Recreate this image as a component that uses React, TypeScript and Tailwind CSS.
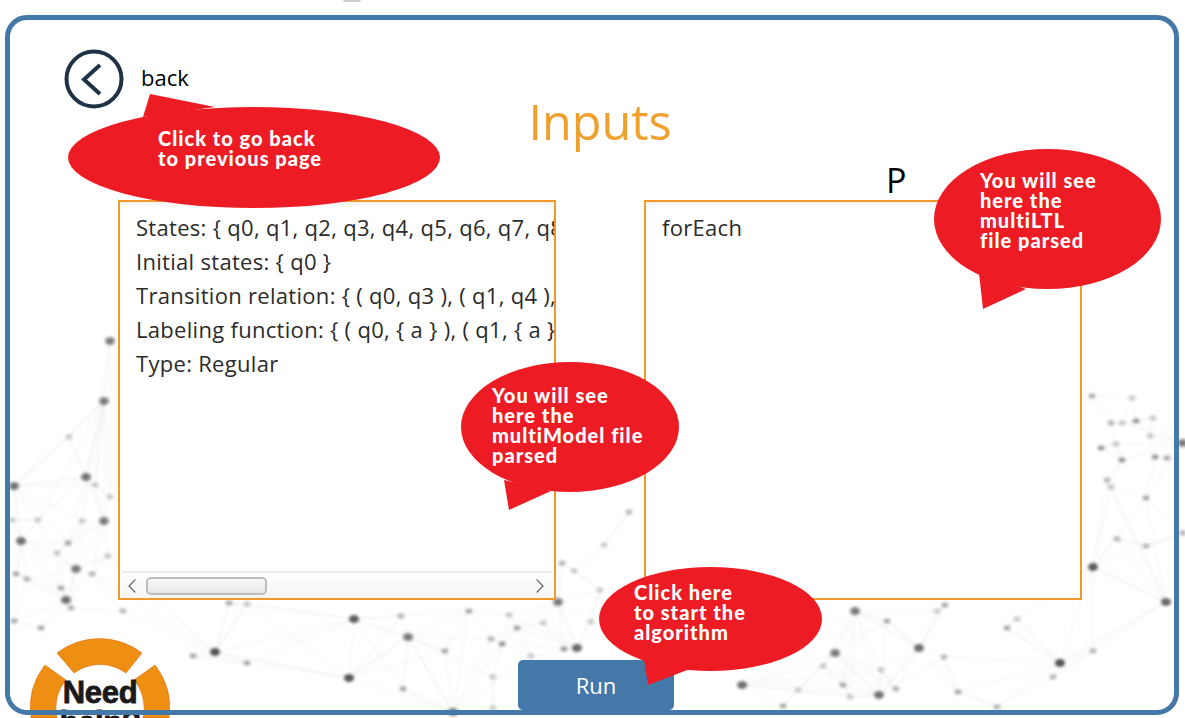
import { ChevronLeft, ChevronRight } from "lucide-react";

// dots read off the reference: x, y, darkness
const DOTS: [number, number, number][] = [
  [110, 341, 0.7], [104, 401, 0.7], [69, 437, 0.3], [86, 477, 0.75], [95, 485, 0.3], [110, 497, 0.3], [14, 486, 0.75],
  [12, 520, 0.3], [38, 520, 0.3], [82, 521, 0.3], [104, 521, 0.7], [21, 541, 0.8], [68, 543, 0.5], [57, 553, 0.3],
  [108, 556, 0.3], [76, 569, 0.7], [92, 574, 0.4], [16, 574, 0.5], [27, 579, 0.4], [61, 588, 0.5], [66, 600, 0.8],
  [71, 608, 0.4], [14, 621, 0.5], [41, 628, 0.5], [123, 611, 0.4],
  [1092, 396, 0.5], [1132, 398, 0.3], [1111, 423, 0.4], [1122, 423, 0.3], [1136, 421, 0.6], [1153, 418, 0.3],
  [1150, 436, 0.3], [1183, 443, 0.7], [1101, 448, 0.6], [1116, 444, 0.3], [1122, 460, 0.6], [1155, 457, 0.6],
  [1167, 458, 0.5], [1107, 480, 0.4], [1111, 487, 0.3], [1146, 498, 0.5], [1117, 539, 0.4], [1146, 546, 0.4],
  [1183, 533, 0.4], [1093, 567, 0.9], [1166, 602, 0.85], [855, 611, 0.7], [887, 621, 0.5], [937, 611, 0.3],
  [945, 605, 0.5], [1017, 619, 0.3], [1007, 628, 0.5], [919, 648, 0.8], [944, 657, 0.4], [835, 653, 0.7],
  [823, 666, 0.3], [881, 670, 0.3], [1060, 663, 0.95], [1093, 651, 0.4], [1053, 677, 0.4], [843, 685, 0.5],
  [850, 697, 0.3], [879, 695, 0.75], [896, 689, 0.4], [958, 692, 0.5], [997, 707, 0.4],
  [229, 603, 0.5], [247, 604, 0.3], [354, 619, 0.9], [215, 652, 0.95], [193, 656, 0.5], [247, 663, 0.5], [349, 678, 0.95],
  [401, 616, 0.4], [408, 637, 0.7], [403, 689, 0.5], [469, 611, 0.5], [509, 615, 0.3], [517, 628, 0.5], [491, 639, 0.4],
  [502, 644, 0.6], [445, 651, 0.5], [493, 677, 0.3], [493, 708, 0.3], [453, 712, 0.7],
  [562, 563, 0.4], [574, 571, 0.3], [558, 602, 0.7], [543, 623, 0.3], [591, 622, 0.3], [577, 648, 0.85], [564, 649, 0.6],
  [531, 656, 0.3], [742, 685, 0.8], [798, 690, 0.3], [783, 706, 0.5], [629, 512, 0.4], [604, 545, 0.3], [600, 590, 0.3],
];

type Seg = [number, number, number, number];

function buildLinks(): Seg[] {
  const out: Seg[] = [];
  DOTS.forEach(([x, y, o]) => {
    const reach = o >= 0.7 ? 170 : 70;
    const near = DOTS.filter(([a, b]) => Math.hypot(a - x, b - y) < reach && (a !== x || b !== y))
      .sort((p, q) => Math.hypot(p[0] - x, p[1] - y) - Math.hypot(q[0] - x, q[1] - y))
      .slice(o >= 0.7 ? 2 : 0, o >= 0.7 ? 9 : 2);
    near.forEach(([a, b]) => out.push([x, y, a, b]));
  });
  return out;
}

const LINKS = buildLinks();

function Network() {
  return (
    <svg className="absolute inset-0" width="1185" height="718" viewBox="0 0 1185 718">
      <defs>
        <filter id="soft">
          <feGaussianBlur stdDeviation="1.4" />
        </filter>
        <filter id="softer">
          <feGaussianBlur stdDeviation="0.9" />
        </filter>
      </defs>
      <g stroke="#000" strokeOpacity="0.02" strokeWidth="2.5" filter="url(#softer)">
        {LINKS.map(([x1, y1, x2, y2], i) => (
          <line key={i} x1={x1} y1={y1} x2={x2} y2={y2} />
        ))}
      </g>
      <g filter="url(#soft)">
        {DOTS.map(([x, y, o], i) => (
          <ellipse key={i} cx={x} cy={y} rx={o >= 0.7 ? 5 : 3.4} ry={o >= 0.7 ? 4 : 2.4} fill="#222" fillOpacity={o * 0.8} />
        ))}
      </g>
    </svg>
  );
}

type BubbleProps = {
  box: string;
  text: string;
  width: number;
  height: number;
  tail: string;
  lines: string[];
};

// red speech bubble, svg origin is the box's top left
function Bubble({ box, text, width, height, tail, lines }: BubbleProps) {
  return (
    <div className={`absolute ${box}`}>
      <svg width={width} height={height} className="block overflow-visible">
        <ellipse cx={width / 2} cy={height / 2} rx={width / 2} ry={height / 2} fill="#ed1c24" />
        <polygon points={tail} fill="#ed1c24" />
      </svg>
      <div className={`absolute ${text} font-['Lato',sans-serif] font-black text-[20px] leading-[20px] tracking-[1px] text-white whitespace-nowrap`}>
        {lines.map((l) => (
          <div key={l}>{l}</div>
        ))}
      </div>
    </div>
  );
}

function LogoBadge() {
  return (
    <div className="absolute left-[30px] top-[637px] w-[150px] h-[81px] bg-white overflow-hidden">
      <svg width="150" height="83" className="absolute left-0 top-[-2px]">
        <g fill="#ee8f13" stroke="#e0701a" strokeWidth="0.6">
          <path d="M27 18 A70 70 0 0 1 112 18 L96 38 A44 44 0 0 0 44 38 Z" />
          <path d="M15 30 A70 70 0 0 0 1 83 L27 83 A44 44 0 0 1 36 45 Z" />
          <path d="M125 30 A70 70 0 0 1 139 83 L113 83 A44 44 0 0 0 104 45 Z" />
        </g>
      </svg>
      <div className="absolute left-0 w-[140px] top-[41px] text-center font-['Liberation_Sans',sans-serif] font-bold text-[31px] leading-[30px] tracking-[-0.3px] text-[#1a1a1a] [-webkit-text-stroke:0.8px_#1a1a1a]">
        Need
        <br />
        help?
      </div>
    </div>
  );
}

export default function App() {
  const rows = [
    "States: { q0, q1, q2, q3, q4, q5, q6, q7, q8, q9 }",
    "Initial states: { q0 }",
    "Transition relation: { ( q0, q3 ), ( q1, q4 ), ( q2, q5 ) }",
    "Labeling function: { ( q0, { a } ), ( q1, { a } ), ( q2, { b } ) }",
    "Type: Regular",
  ];

  return (
    <div className="relative w-[1185px] h-[718px] overflow-hidden bg-white font-['Open_Sans',sans-serif]">
      <Network />

      <div className="absolute left-[343px] top-[-3px] w-[18px] h-[5px] rounded-full bg-[#ccc]" />

      <div className="relative h-[718px] pt-[49px] pl-[64px] pr-[49px] flex flex-col">
        <div className="flex items-center gap-[17px]">
          <svg width="60" height="60" viewBox="0 0 60 60">
            <circle cx="30" cy="30" r="27.5" fill="none" stroke="#1e3446" strokeWidth="4" />
            <path d="M36 16 L20 30.5 L36 45" fill="none" stroke="#1e3446" strokeWidth="4" />
          </svg>
          <span className="text-[22px] text-black leading-none pb-[4px]">back</span>
        </div>

        <h1 className="mt-[-20px] text-center text-[48.5px] leading-[64px] font-normal text-[#f0a02c]">Inputs</h1>

        <div className="relative mt-[47px] ml-[54px] flex gap-[88px]">
          <div className="w-[438px] h-[400px] border-2 border-[#f0982a] bg-white flex flex-col shadow-[inset_0_6px_6px_-4px_rgba(0,0,0,0.08)]">
            <div className="flex-1 overflow-hidden pt-[8px] pl-[16px] text-[22px] leading-[34px] tracking-[0.3px] text-[#2b2b2b] whitespace-nowrap">
              {rows.map((r) => (
                <div key={r}>{r}</div>
              ))}
            </div>
            <div className="h-[27px] mx-[2px] border-t-2 border-[#ececec] bg-gradient-to-b from-white to-[#f4f4f4] flex items-center justify-between">
              <div className="flex items-center gap-[2px] ml-[-2px]">
                <ChevronLeft size={24} strokeWidth={1.2} className="text-[#666]" />
                <div className="w-[121px] h-[18px] rounded-[5px] border-2 border-[#bdbdbd] bg-gradient-to-b from-[#fafafa] to-[#e6e6e6]" />
              </div>
              <ChevronRight size={24} strokeWidth={1.2} className="text-[#666]" />
            </div>
          </div>

          <div className="w-[438px] h-[400px] border-2 border-[#f0982a] bg-white pt-[8px] pl-[16px] text-[22px] leading-[34px] tracking-[0.3px] text-[#2b2b2b] shadow-[inset_0_6px_6px_-4px_rgba(0,0,0,0.08)]">
            forEach
          </div>

          <span className="absolute left-[768px] top-[-42px] text-[34px] leading-[45px] text-black">P</span>
        </div>

        <button className="self-center mt-[60px] ml-[-8px] w-[156px] h-[50px] rounded-[5px] bg-[#4478a8] text-white text-[22px]">Run</button>
      </div>

      <LogoBadge />

      <div className="absolute left-[5px] top-[15px] w-[1174px] h-[700px] rounded-[22px] border-[5px] border-[#4478a8] pointer-events-none" />

      <Bubble
        box="left-[68px] top-[107px]"
        width={372}
        height={101}
        tail="75,10 82,-13 147,0"
        text="left-[90px] top-[21px]"
        lines={["Click to go back", "to previous page"]}
      />
      <Bubble
        box="left-[461px] top-[362px]"
        width={218}
        height={130}
        tail="43,118 48,148 90,129"
        text="left-[31px] top-[23px]"
        lines={["You will see", "here the", "multiModel file", "parsed"]}
      />
      <Bubble
        box="left-[934px] top-[149px]"
        width={227}
        height={140}
        tail="45,124 49,160 92,140"
        text="left-[46px] top-[21px]"
        lines={["You will see", "here the", "multiLTL", "file parsed"]}
      />
      <Bubble
        box="left-[599px] top-[567px]"
        width={223}
        height={104}
        tail="45,93 49,118 91,102"
        text="left-[35px] top-[15px]"
        lines={["Click here", "to start the", "algorithm"]}
      />
    </div>
  );
}
